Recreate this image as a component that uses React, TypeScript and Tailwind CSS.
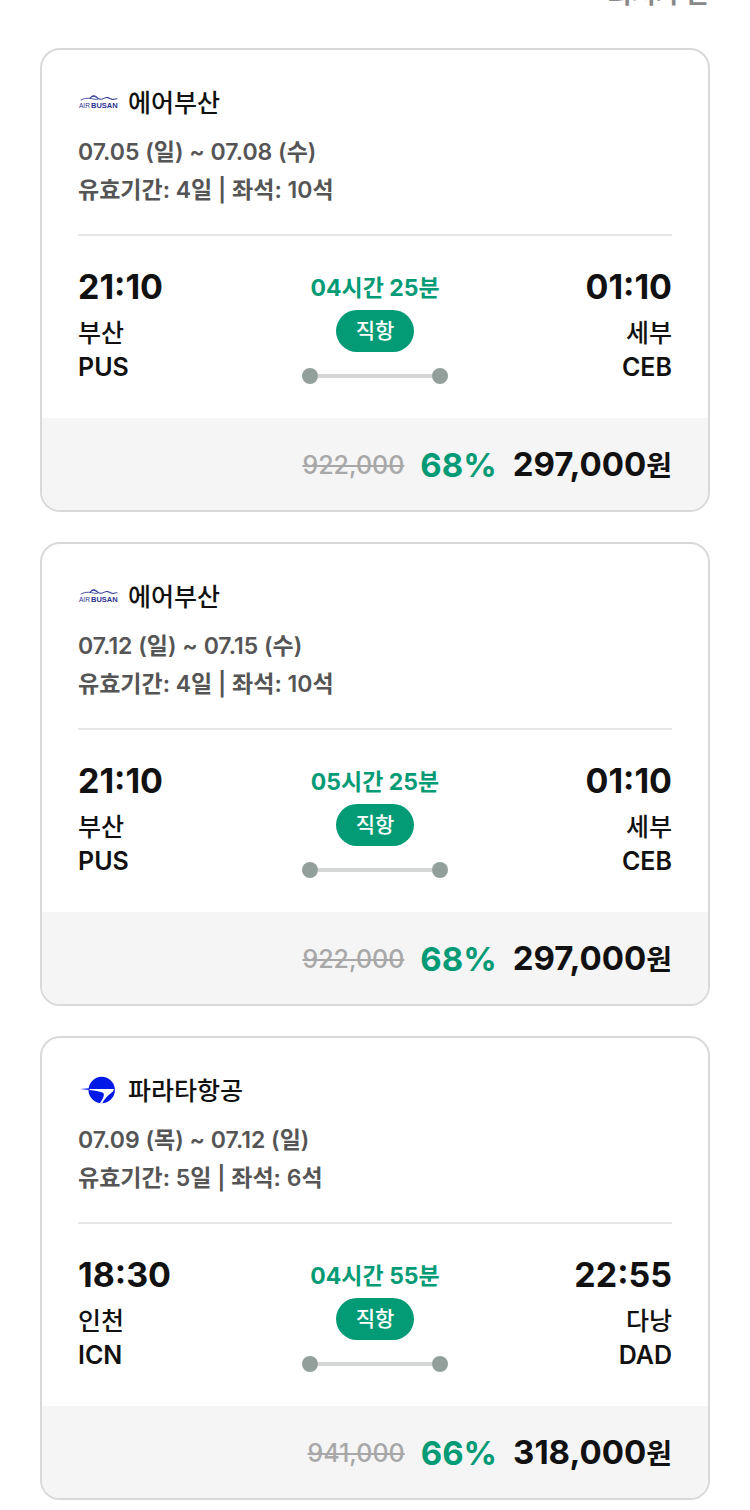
type Airline = 'airbusan' | 'parata';

interface Stop {
  time: string;
  city: string;
  code: string;
}

interface Flight {
  id: number;
  airline: Airline;
  dates: string;
  days: number;
  seats: number;
  duration: string;
  from: Stop;
  to: Stop;
  originalPrice: string;
  discount: number;
  price: string;
}

const AIRLINE_NAMES: Record<Airline, string> = {
  airbusan: '에어부산',
  parata: '파라타항공',
};

const FLIGHTS: Flight[] = [
  {
    id: 1,
    airline: 'airbusan',
    dates: '07.05 (일) ~ 07.08 (수)',
    days: 4,
    seats: 10,
    duration: '04시간 25분',
    from: { time: '21:10', city: '부산', code: 'PUS' },
    to: { time: '01:10', city: '세부', code: 'CEB' },
    originalPrice: '922,000',
    discount: 68,
    price: '297,000',
  },
  {
    id: 2,
    airline: 'airbusan',
    dates: '07.12 (일) ~ 07.15 (수)',
    days: 4,
    seats: 10,
    duration: '05시간 25분',
    from: { time: '21:10', city: '부산', code: 'PUS' },
    to: { time: '01:10', city: '세부', code: 'CEB' },
    originalPrice: '922,000',
    discount: 68,
    price: '297,000',
  },
  {
    id: 3,
    airline: 'parata',
    dates: '07.09 (목) ~ 07.12 (일)',
    days: 5,
    seats: 6,
    duration: '04시간 55분',
    from: { time: '18:30', city: '인천', code: 'ICN' },
    to: { time: '22:55', city: '다낭', code: 'DAD' },
    originalPrice: '941,000',
    discount: 66,
    price: '318,000',
  },
];

function AirlineLogo({ airline }: { airline: Airline }) {
  if (airline === 'airbusan') {
    return (
      <svg viewBox="0 0 40 40" className="h-10 w-10" aria-hidden="true">
        <g fill="none" stroke="#3b439b" strokeLinecap="round" strokeLinejoin="round">
          <path d="M3 17c3-1.700 6.500-2.200 10.500-1.400 2.500.4 4 1 6 .7" strokeWidth="0.9" />
          <path d="M12 15.300c1.500-2 3.500-2.600 5.500-1.600 2 1 3.500 2.800 5.500 2.600 2.500-.2 4-2.200 6.500-1.700 2.200.5 3.500 2.200 5.500 1.800 1.300-.3 2.200-.8 4-.6" strokeWidth="1.100" />
          <path d="M14.500 12.800c2.500-.7 4.500.8 6 3.200" strokeWidth="0.8" />
        </g>
        <g fill="#2e3192" fontFamily="'Liberation Sans', Arial, sans-serif">
          <text x="1" y="25" fontSize="6.500">
            AIR
          </text>
          <text x="13" y="25" fontSize="7.500" fontWeight="700">
            BUSAN
          </text>
        </g>
      </svg>
    );
  }

  return (
    <svg viewBox="0 0 40 40" className="h-10 w-10" aria-hidden="true">
      <circle cx="23.700" cy="19" r="13.200" fill="#0019e6" />
      <path d="M10.500 17.900H35.900C35.700 19.600 34.500 21 32.500 22.600C29.300 25.200 26 28.500 24.300 32.200L22 32.100C24 29 26.300 25.500 25.800 22.900C25.300 20.700 18 20 10.500 18.800Z" fill="#fff" />
      <path d="M2 18L11.500 17.200V18.900Z" fill="#0019e6" />
    </svg>
  );
}

function RouteStop({ stop, alignRight = false }: { stop: Stop; alignRight?: boolean }) {
  return (
    <div className={alignRight ? 'flex-1 text-right' : 'flex-1'}>
      <p className="text-[34px] leading-10 font-bold">{stop.time}</p>
      <p className="mt-2 text-[25px] leading-9 font-medium">{stop.city}</p>
      <p className="text-[25px] leading-8 font-semibold">{stop.code}</p>
    </div>
  );
}

function FlightCard({ flight }: { flight: Flight }) {
  return (
    <article className="overflow-hidden rounded-[20px] border-2 border-[#d8dada] bg-white">
      <div className="px-9">
        <header className="border-b-2 border-[#e6e6e6] pt-[33px] pb-[25px]">
          <div className="flex items-center gap-[10px]">
            <AirlineLogo airline={flight.airline} />
            <h2 className="text-[25px] leading-9 font-medium">{AIRLINE_NAMES[flight.airline]}</h2>
          </div>
          <div className="mt-[10px] text-[23px] leading-[38px] font-semibold text-[#555]">
            <p>{flight.dates}</p>
            <p>
              유효기간: {flight.days}일 | 좌석: {flight.seats}석
            </p>
          </div>
        </header>

        <div className="flex pt-[31px] pb-[34px]">
          <RouteStop stop={flight.from} />
          <div className="flex flex-col items-center pt-1">
            <p className="text-[23px] leading-[34px] font-bold text-[#039b76]">{flight.duration}</p>
            <span className="mt-[5px] rounded-full bg-[#039b76] px-5 text-[21px] leading-[42px] font-medium text-white">
              직항
            </span>
            <div className="mt-4 flex w-[146px] items-center">
              <span className="size-4 rounded-full bg-[#929f9a]" />
              <span className="h-1 flex-1 bg-[#d4d7d6]" />
              <span className="size-4 rounded-full bg-[#929f9a]" />
            </div>
          </div>
          <RouteStop stop={flight.to} alignRight />
        </div>
      </div>

      <footer className="flex h-[92px] items-center justify-end bg-[#f5f5f5] px-9 pt-[2px]">
        <del className="text-[25px] leading-10 font-medium text-[#a8a8a8]">{flight.originalPrice}</del>
        <strong className="ml-4 text-[33px] leading-10 font-bold text-[#039b76]">{flight.discount}%</strong>
        <strong className="ml-4 text-[33px] leading-10 font-bold">
          {flight.price}
          <span className="text-[28px]">원</span>
        </strong>
      </footer>
    </article>
  );
}

export default function App() {
  return (
    <main className="overflow-hidden bg-white px-10 pb-[10px] font-['Inter','Noto_Sans_CJK_KR',sans-serif] text-[#111]">
      <div className="-mt-6 flex justify-end">
        <button type="button" className="text-[26px] leading-9 font-semibold text-[#888]">
          최저가 순
        </button>
      </div>
      <div className="mt-9 flex flex-col gap-[30px]">
        {FLIGHTS.map((flight) => (
          <FlightCard key={flight.id} flight={flight} />
        ))}
      </div>
    </main>
  );
}
